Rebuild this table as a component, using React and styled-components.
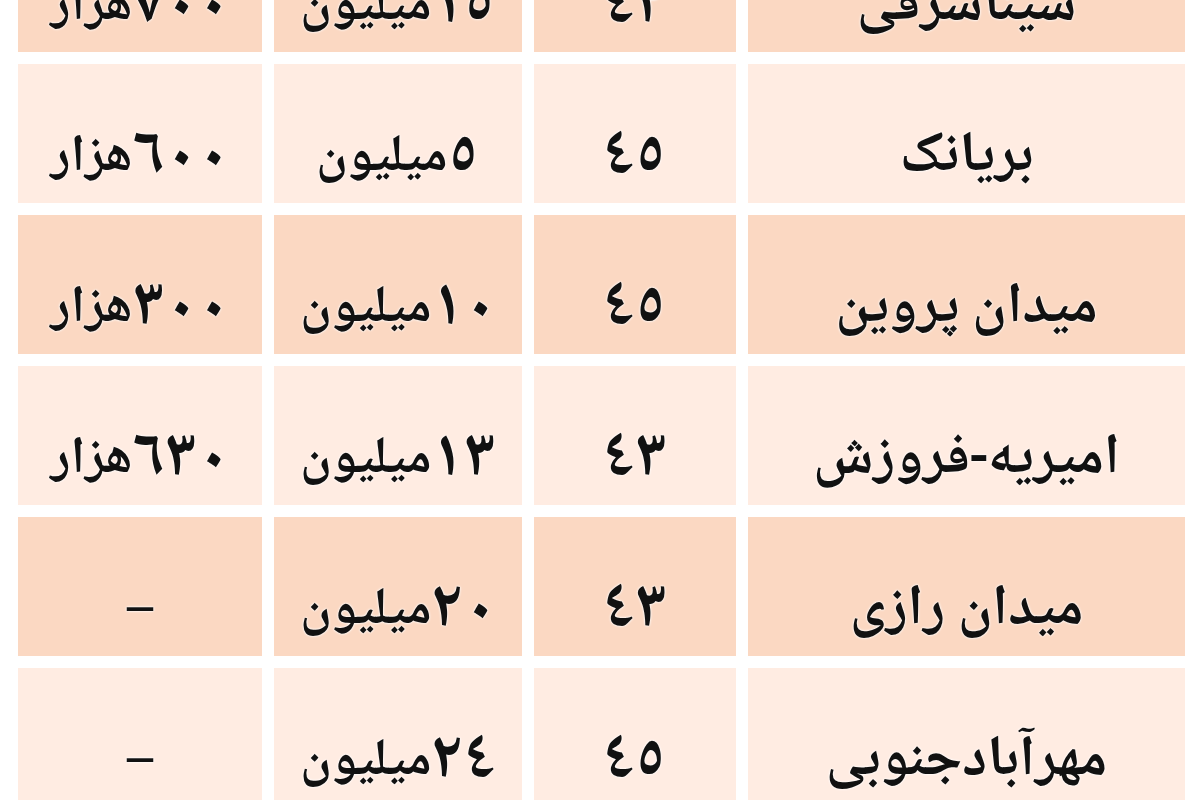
import React from "react";
import styled, { createGlobalStyle } from "styled-components";

const GlobalStyle = createGlobalStyle`
  html, body {
    margin: 0;
    padding: 0;
    background: #ffffff;
    overflow: hidden;
    height: 800px;
  }
  body {
    font-family: "Noto Naskh Arabic", "Noto Sans Arabic", "DejaVu Sans", sans-serif;
  }
`;

const Page = styled.div`
  width: 1200px;
  height: 800px;
  overflow: hidden;
  background: #ffffff;
`;

const Table = styled.div`
  direction: rtl;
  display: grid;
  grid-template-columns: 437px 202px 248px 244px;
  grid-auto-rows: 139px;
  column-gap: 12px;
  row-gap: 12px;
  margin: -87px 15px 0 18px;
`;

const Cell = styled.div`
  display: flex;
  align-items: center;
  justify-content: center;
  padding-top: 50px;
  box-sizing: border-box;
  background: ${(p) => (p.$shade ? "#fbd8c2" : "#ffece2")};
  color: #111111;
  font-size: ${(p) => (p.$name ? "57px" : "52px")};
  font-weight: 700;
  line-height: 1;
  white-space: nowrap;
  text-shadow: 0 0 3px #ffffff, 0 0 2px #ffffff;
`;

const Num = styled.span`
  font-size: 66px;
  font-weight: 700;
`;

const rows = [
  [{ t: "سیناشرقی" }, { n: "٤٢" }, { n: "١٥", t: "میلیون" }, { n: "٧٠٠", t: "هزار" }],
  [{ t: "بریانک" }, { n: "٤٥" }, { n: "٥", t: "میلیون" }, { n: "٦٠٠", t: "هزار" }],
  [{ t: "میدان پروین" }, { n: "٤٥" }, { n: "١٠", t: "میلیون" }, { n: "٣٠٠", t: "هزار" }],
  [{ t: "امیریه-فروزش" }, { n: "٤٣" }, { n: "١٣", t: "میلیون" }, { n: "٦٣٠", t: "هزار" }],
  [{ t: "میدان رازی" }, { n: "٤٣" }, { n: "٢٠", t: "میلیون" }, { t: "–" }],
  [{ t: "مهرآبادجنوبی" }, { n: "٤٥" }, { n: "٢٤", t: "میلیون" }, { t: "–" }],
];

export default function App() {
  return (
    <Page>
      <GlobalStyle />
      <Table>
        {rows.map((row, i) =>
          row.map((c, j) => (
            <Cell key={`${i}-${j}`} $shade={i % 2 === 0} $name={j === 0}>
              {c.n && <Num>{c.n}</Num>}
              {c.t}
            </Cell>
          ))
        )}
      </Table>
    </Page>
  );
}
